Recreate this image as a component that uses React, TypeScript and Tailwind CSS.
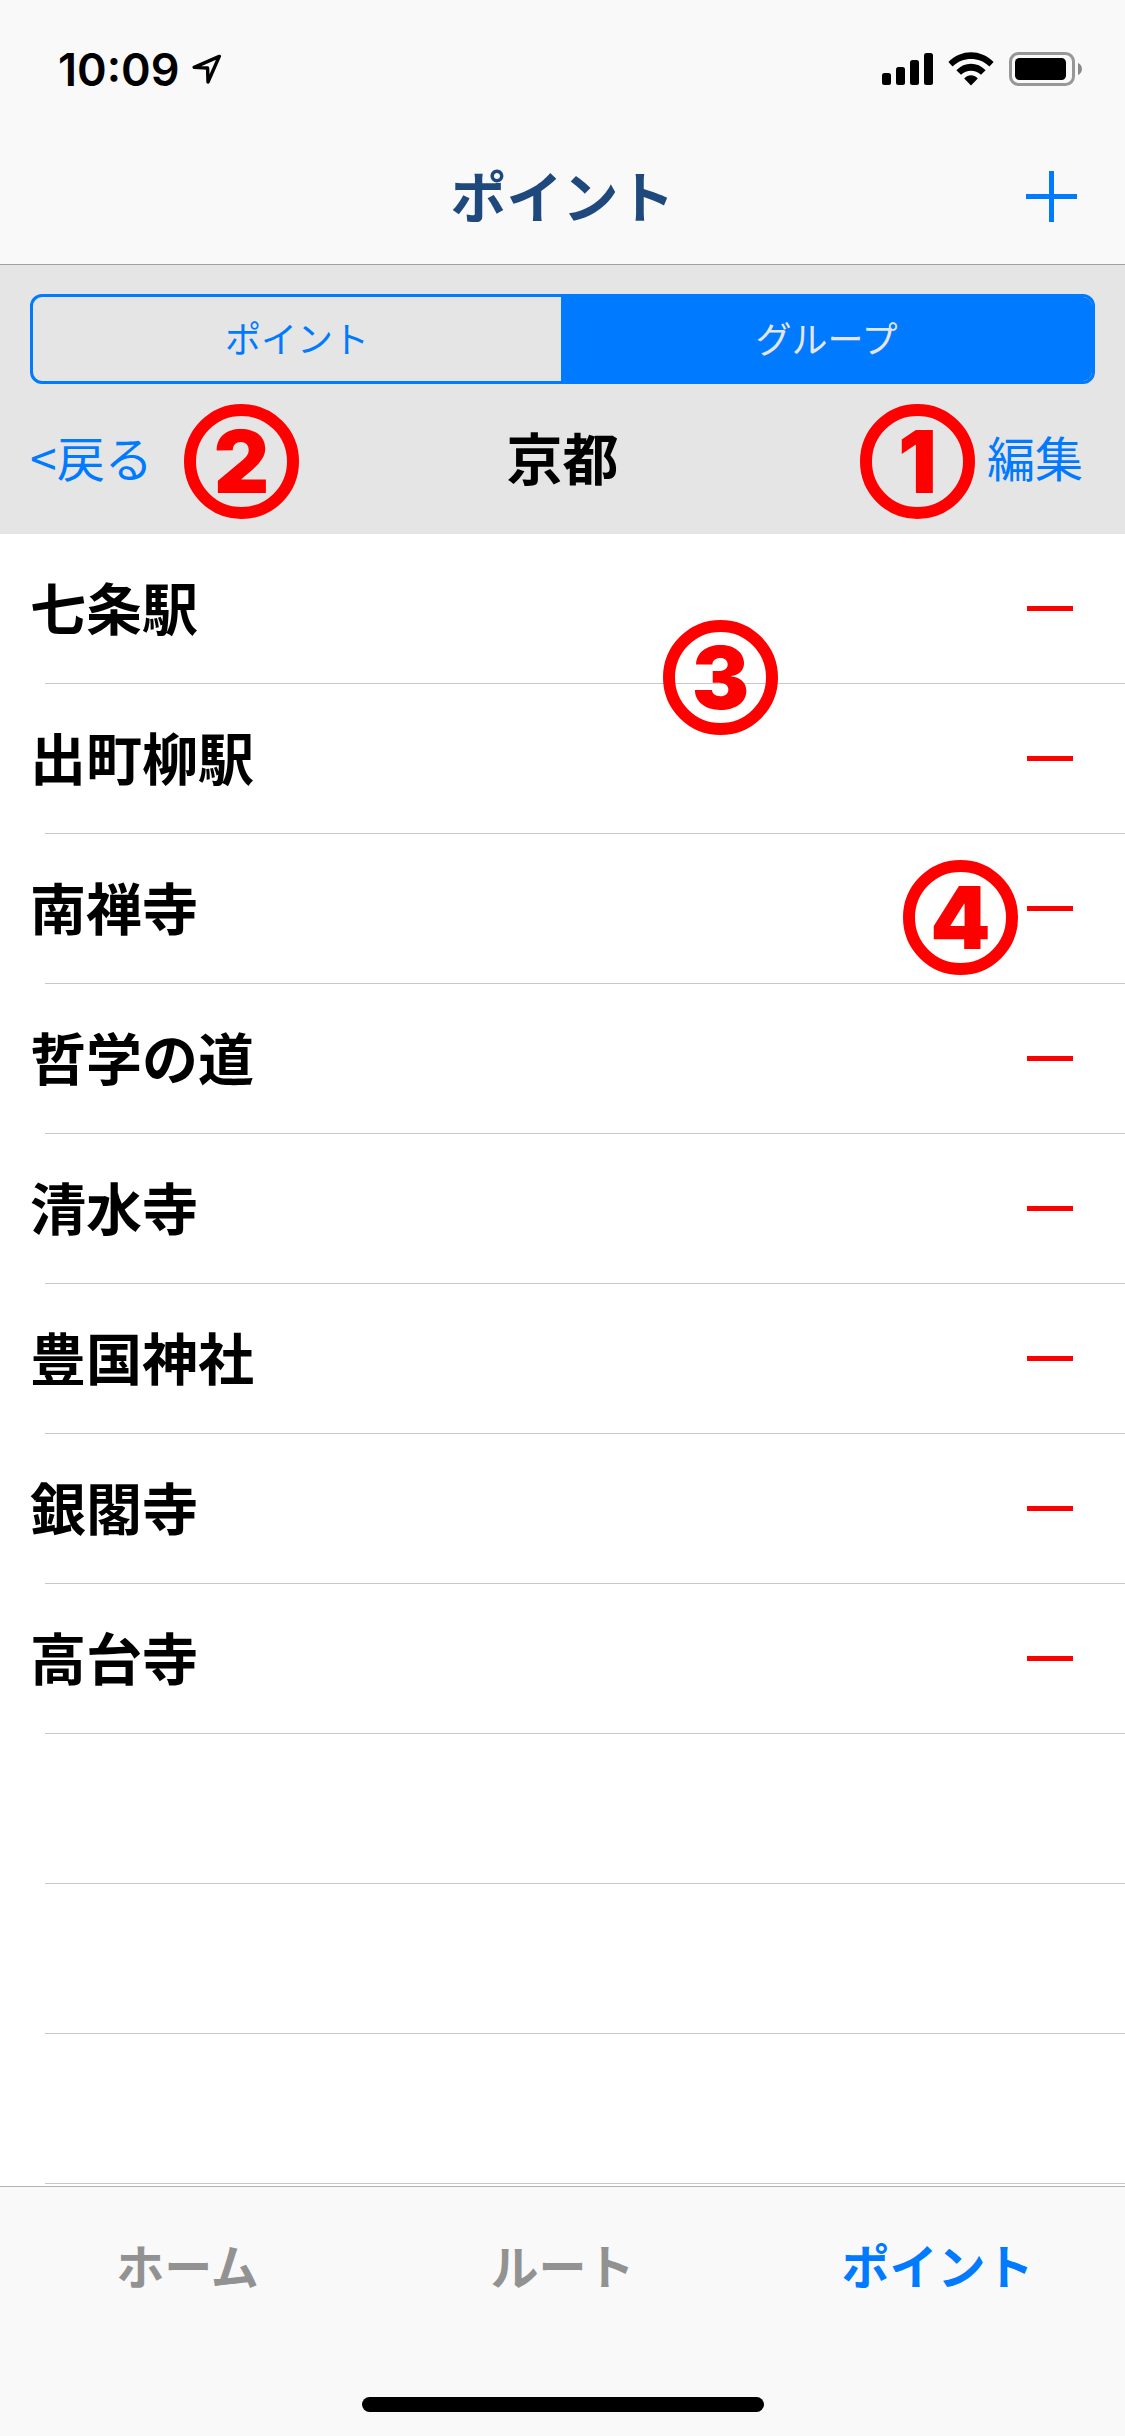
import { useState } from "react";
import clsx from "clsx";

type Point = { id: number; name: string };

const initialPoints: Point[] = [
  { id: 1, name: "七条駅" },
  { id: 2, name: "出町柳駅" },
  { id: 3, name: "南禅寺" },
  { id: 4, name: "哲学の道" },
  { id: 5, name: "清水寺" },
  { id: 6, name: "豊国神社" },
  { id: 7, name: "銀閣寺" },
  { id: 8, name: "高台寺" },
];

const ROW_COUNT = 11;
const segments = ["ポイント", "グループ"];
const tabs = ["ホーム", "ルート", "ポイント"];

const Marker = ({ label, className }: { label: string; className: string }) => (
  <span
    className={clsx(
      "pointer-events-none absolute z-10 flex size-[115px] items-center justify-center rounded-full border-12 border-[#ff0000] font-['Inter',sans-serif] text-[86px] leading-none font-black text-[#ff0000]",
      className
    )}
  >
    {label}
  </span>
);

const StatusBar = () => (
  <div className="flex h-[138px] items-center justify-between pr-[42px] pl-[58px]">
    <div className="flex items-center gap-3">
      <span className="font-['Inter',sans-serif] text-[45px] leading-none font-semibold">10:09</span>
      <svg width="30" height="30" viewBox="0 0 30 30" fill="none" stroke="#000" strokeWidth="3.4" strokeLinejoin="round">
        <path d="M27.3 2.4 2.2 13.4 15.6 14 16 28Z" />
      </svg>
    </div>
    <div className="flex items-center gap-[15px]">
      <svg width="51" height="34" viewBox="0 0 51 34">
        <rect x="0" y="21" width="9" height="12" rx="2.5" />
        <rect x="14" y="15" width="9" height="18" rx="2.5" />
        <rect x="28" y="8" width="9" height="25" rx="2.5" />
        <rect x="42" y="1" width="9" height="32" rx="2.5" />
      </svg>
      <svg width="46" height="34" viewBox="0 0 46 34">
        <path d="M0.4 10C13 -3.1 33 -3.1 45.6 10L41.4 14.4C31 4.6 15 4.6 4.6 14.4Z" />
        <path d="M8.4 18.2C16.5 9.6 29.5 9.6 37.6 18.2L33 22.8C27.3 17.3 18.7 17.3 13 22.8Z" />
        <path d="M16.2 26.4C20.3 22.2 25.7 22.2 29.8 26.4L23 33.4Z" />
      </svg>
      <svg width="74" height="34" viewBox="0 0 74 34">
        <rect x="1.5" y="1.5" width="63" height="31" rx="8" fill="none" stroke="#979797" strokeWidth="3" />
        <rect x="6" y="6" width="51" height="22" rx="4.5" />
        <path d="M69 11C74.3 13 74.3 21 69 23Z" fill="#8a8a8a" />
      </svg>
    </div>
  </div>
);

const App = () => {
  const [points, setPoints] = useState(initialPoints);
  const [segment, setSegment] = useState("グループ");
  const [tab, setTab] = useState("ポイント");

  const addPoint = () => setPoints((prev) => [...prev, { id: Date.now(), name: "新規ポイント" }]);
  const removePoint = (id: number) => setPoints((prev) => prev.filter((p) => p.id !== id));

  const rows = Array.from({ length: Math.max(ROW_COUNT, points.length) }, (_, i) => points[i]);

  return (
    <div className="flex min-h-screen flex-col bg-white font-['Noto_Sans_CJK_JP',sans-serif] text-black">
      <header className="border-b border-[#a0a0a0] bg-[#f9f9f9]">
        <StatusBar />
        <div className="grid h-[126px] grid-cols-[1fr_auto_1fr] items-start">
          <h1 className="col-start-2 pt-6 text-[56px] leading-[64px] font-bold text-[#1f497d]">ポイント</h1>
          <button type="button" aria-label="追加" onClick={addPoint} className="mt-8 mr-12 justify-self-end">
            <svg width="51" height="52" viewBox="0 0 51 52" stroke="#007aff" strokeWidth="5">
              <path d="M0 26.5H51M25.5 1V52" />
            </svg>
          </button>
        </div>
      </header>

      <section className="relative bg-[#e5e5e5] px-[30px] pt-[29px]">
        <div className="grid h-[90px] grid-cols-[528fr_531fr] overflow-hidden rounded-xl border-3 border-[#007aff]">
          {segments.map((name) => (
            <button
              key={name}
              type="button"
              aria-pressed={segment === name}
              onClick={() => setSegment(name)}
              className={clsx(
                "pb-1 text-4xl font-normal",
                segment === name ? "bg-[#007aff] text-[#e5e5e5]" : "text-[#007aff]"
              )}
            >
              {name}
            </button>
          ))}
        </div>
        <div className="grid h-[150px] grid-cols-[1fr_auto_1fr] items-center pb-1.5 text-5xl font-normal text-[#007aff]">
          <button type="button" className="justify-self-start">
            &lt;戻る
          </button>
          <h2 className="text-[56px] leading-[64px] font-bold text-black">京都</h2>
          <button type="button" className="mr-3 justify-self-end">
            編集
          </button>
        </div>
        <Marker label="2" className="top-[139px] left-[184px]" />
        <Marker label="1" className="top-[139px] right-[150px]" />
      </section>

      <main className="flex-1">
        <ul>
          {rows.map((point, idx) => (
            <li key={point ? point.id : `empty-${idx}`} className="relative flex h-[150px] flex-col">
              <div className="flex flex-1 items-center justify-between pr-[52px] pl-[30px]">
                {point && (
                  <>
                    <span className="pb-1.5 text-[56px] leading-[64px] font-bold">{point.name}</span>
                    <button
                      type="button"
                      aria-label={`${point.name}を削除`}
                      onClick={() => removePoint(point.id)}
                      className="flex h-[65px] items-center"
                    >
                      <span className="h-[5px] w-[46px] bg-[#ff0000]" />
                    </button>
                  </>
                )}
              </div>
              <div className="ml-[45px] h-px bg-[#c8c7cc]" />
              {idx === 0 && <Marker label="3" className="top-[86px] right-[347px]" />}
              {idx === 2 && <Marker label="4" className="top-[26px] right-[107px]" />}
            </li>
          ))}
        </ul>
      </main>

      <footer className="border-t border-[#b2b2b2] bg-[#f9f9f9] pb-6">
        <nav className="grid h-[210px] grid-cols-3 items-start pt-[45px]">
          {tabs.map((name) => (
            <button
              key={name}
              type="button"
              onClick={() => setTab(name)}
              className={clsx("text-5xl leading-[64px] font-bold", tab === name ? "text-[#007aff]" : "text-[#929292]")}
            >
              {name}
            </button>
          ))}
        </nav>
        <div className="mx-auto h-[15px] w-[402px] rounded-full bg-black" />
      </footer>
    </div>
  );
};

export default App;
